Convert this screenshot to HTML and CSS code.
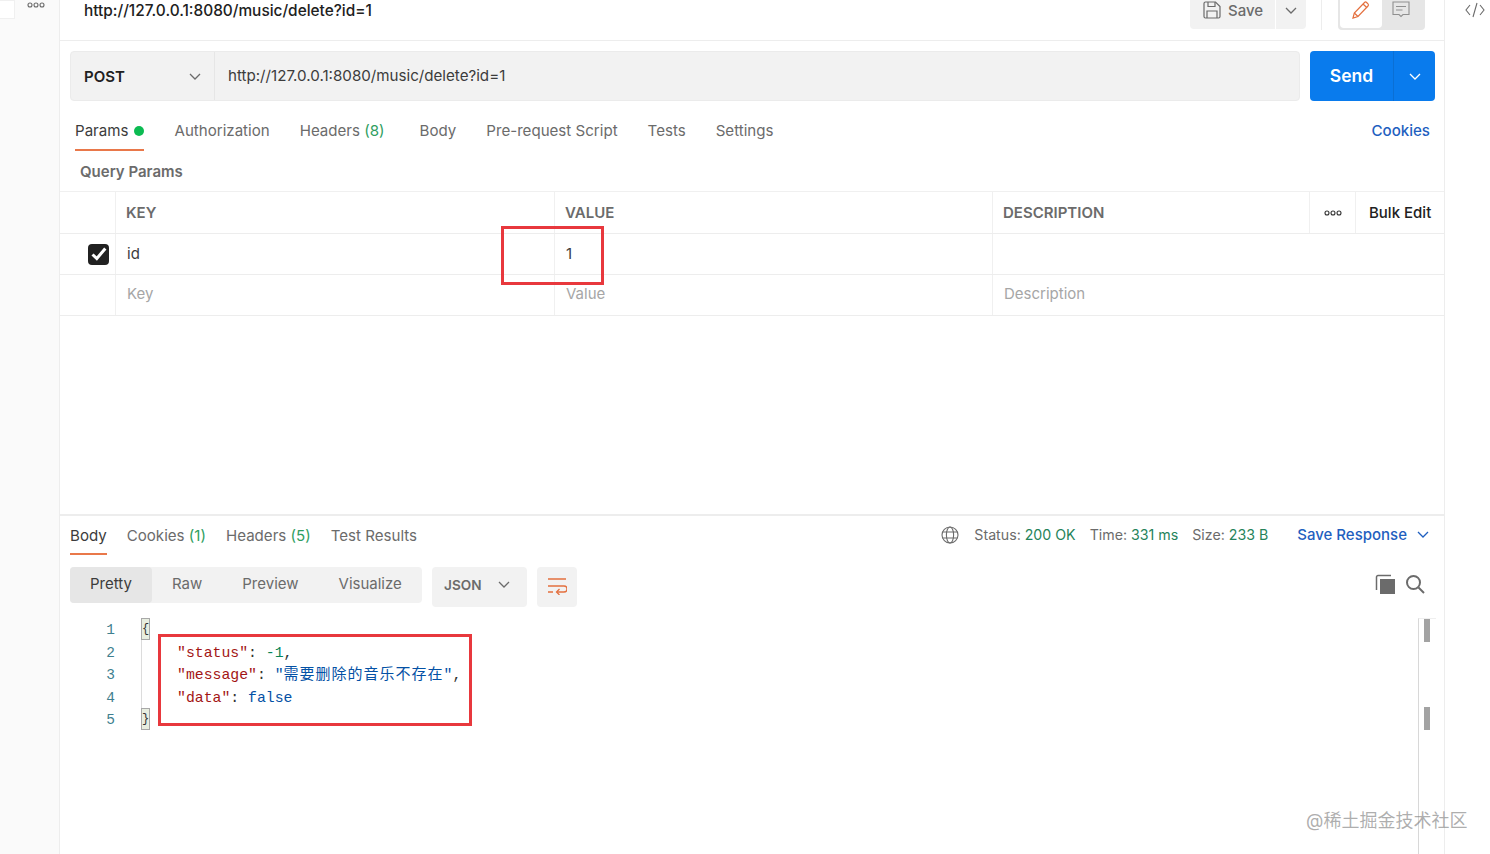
FILE: index.html
```html
<!DOCTYPE html>
<html lang="en">
<head>
    <meta charset="UTF-8">
    <title>POST delete music</title>
    <link rel="stylesheet" href="styles.css">
</head>
<body>
<div class="app">
    <aside class="side">
        <div class="side-tab"></div>
        <svg class="dots side-dots" width="18" height="6" viewBox="0 0 18 6"><circle cx="3" cy="3" r="2"/><circle cx="9" cy="3" r="2"/><circle cx="15" cy="3" r="2"/></svg>
    </aside>

    <main class="main">
        <!-- request title -->
        <header class="title-bar">
            <span class="req-title">http://127.0.0.1:8080/music/delete?id=1</span>
            <div class="save-group">
                <div class="save-btn">
                    <svg width="18" height="18" viewBox="0 0 18 18" fill="none" stroke="#6b6b6b" stroke-width="1.2"><path d="M1 2.500a1.500 1.500 0 0 1 1.500-1.500h10l4.500 4.500v10a1.500 1.500 0 0 1-1.500 1.500h-13a1.500 1.500 0 0 1-1.500-1.500z"/><path d="M5 1v4.500h7V1M4 17v-7h10v7"/></svg>
                    <span>Save</span>
                </div>
                <div class="save-arrow">
                    <svg class="chev" width="12" height="7" viewBox="0 0 12 7"><path d="M1 1l5 5 5-5"/></svg>
                </div>
            </div>
            <div class="mode-switch">
                <div class="mode active">
                    <svg width="20" height="20" viewBox="0 0 20 20" fill="none" stroke="#e4703f" stroke-width="1.2"><path d="M2 18l1.300-5L13.500 2.500a1.500 1.500 0 0 1 2.100 0l1.400 1.400a1.500 1.500 0 0 1 0 2.100L7 16.500z"/><path d="M3.300 13L7 16.500M12 4l4 3.800"/></svg>
                </div>
                <div class="mode mode-note">
                    <svg width="18" height="18" viewBox="0 0 18 18" fill="none" stroke="#8f8f8f" stroke-width="1.1"><path d="M1 1h16v12.500h-6l-2 2-2-2H1z"/><path d="M4 5.500h10M4 9h6.500"/></svg>
                </div>
            </div>
        </header>

        <!-- url bar -->
        <div class="url-bar">
            <div class="url-field">
                <div class="method">
                    <span>POST</span>
                    <svg class="chev" width="12" height="7" viewBox="0 0 12 7"><path d="M1 1l5 5 5-5"/></svg>
                </div>
                <div class="url-text">http://127.0.0.1:8080/music/delete?id=1</div>
            </div>
            <div class="send">
                <span class="send-label">Send</span>
                <span class="send-arrow"><svg class="chev chev-white" width="12" height="7" viewBox="0 0 12 7"><path d="M1 1l5 5 5-5"/></svg></span>
            </div>
        </div>

        <!-- request tabs -->
        <nav class="req-tabs">
            <span class="tab on">Params<i class="green-dot"></i></span>
            <span class="tab t-auth">Authorization</span>
            <span class="tab t-head">Headers <em>(8)</em></span>
            <span class="tab t-body">Body</span>
            <span class="tab t-pre">Pre-request Script</span>
            <span class="tab t-tests">Tests</span>
            <span class="tab">Settings</span>
            <span class="cookies-link">Cookies</span>
        </nav>
        <div class="query-title">Query Params</div>

        <!-- params table -->
        <div class="params">
            <div class="row head">
                <div class="cell"></div>
                <div class="cell key-cell">KEY</div>
                <div class="cell">VALUE</div>
                <div class="cell">DESCRIPTION</div>
                <div class="cell dots-cell">
                    <svg class="dots dark" width="18" height="6" viewBox="0 0 18 6"><circle cx="3" cy="3" r="2"/><circle cx="9" cy="3" r="2"/><circle cx="15" cy="3" r="2"/></svg>
                </div>
                <div class="cell bulk">Bulk Edit</div>
            </div>
            <div class="row">
                <div class="cell check-cell">
                    <span class="check"><svg width="16" height="14" viewBox="0 0 16 14" fill="none" stroke="#fff" stroke-width="3"><path d="M1.500 7.500l4.300 4 8.500-10"/></svg></span>
                </div>
                <div class="cell val">id</div>
                <div class="cell val">1</div>
                <div class="cell wide"></div>
            </div>
            <div class="row">
                <div class="cell"></div>
                <div class="cell val ph">Key</div>
                <div class="cell val ph">Value</div>
                <div class="cell val ph wide">Description</div>
            </div>
        </div>

        <!-- response -->
        <section class="response">
            <div class="res-head">
                <span class="res-tab on">Body</span>
                <span class="res-tab">Cookies <em>(1)</em></span>
                <span class="res-tab">Headers <em>(5)</em></span>
                <span class="res-tab">Test Results</span>
                <div class="res-meta">
                    <svg class="globe" width="18" height="18" viewBox="0 0 18 18" fill="none" stroke="#6b6b6b" stroke-width="1.100"><circle cx="9" cy="9" r="8"/><ellipse cx="9" cy="9" rx="3.600" ry="8"/><path d="M1.600 6h14.800M1.600 12h14.800"/></svg>
                    <span class="stat">Status: <b>200 OK</b></span>
                    <span class="stat">Time: <b>331 ms</b></span>
                    <span class="stat">Size: <b>233 B</b></span>
                    <span class="save-res">Save Response
                        <svg class="chev chev-blue" width="12" height="7" viewBox="0 0 12 7"><path d="M1 1l5 5 5-5"/></svg>
                    </span>
                </div>
            </div>
            <div class="res-tools">
                <div class="views">
                    <span class="view on">Pretty</span>
                    <span class="view">Raw</span>
                    <span class="view">Preview</span>
                    <span class="view">Visualize</span>
                </div>
                <div class="lang">
                    <span>JSON</span>
                    <svg class="chev" width="12" height="7" viewBox="0 0 12 7"><path d="M1 1l5 5 5-5"/></svg>
                </div>
                <div class="wrap-btn">
                    <svg width="20" height="18" viewBox="0 0 20 18" fill="none" stroke="#e4703f" stroke-width="1.300"><path d="M1 2h18M1 9h16a2.500 2.500 0 0 1 0 6h-7M1 15h5"/><path d="M12.500 12l-3 3 3 3"/></svg>
                </div>
                <div class="res-icons">
                    <svg width="20" height="20" viewBox="0 0 20 20"><path d="M5 5h15v15H5z" fill="#6b6b6b"/><path d="M1.500 16V3a1.500 1.500 0 0 1 1.500-1.500h13" fill="none" stroke="#6b6b6b" stroke-width="1.500"/></svg>
                    <svg width="20" height="20" viewBox="0 0 20 20" fill="none" stroke="#6b6b6b" stroke-width="2"><circle cx="8.500" cy="8.500" r="6.500"/><path d="M13.500 13.500l5.500 5.500"/></svg>
                </div>
            </div>
            <div class="code-area">
                <div class="gutter">
                    <div>1</div><div>2</div><div>3</div><div>4</div><div>5</div>
                </div>
                <div class="code">
                    <div class="line"><span class="brace">{</span></div>
                    <div class="line ind"><span class="k">"status"</span>: <span class="n">-1</span>,</div>
                    <div class="line ind"><span class="k">"message"</span>: <span class="s">"<span class="cjk">需要删除的音乐不存在</span>"</span>,</div>
                    <div class="line ind"><span class="k">"data"</span>: <span class="s">false</span></div>
                    <div class="line"><span class="brace">}</span></div>
                </div>
                <div class="scroll-track">
                    <span class="thumb first"></span>
                    <span class="thumb"></span>
                </div>
            </div>
        </section>
    </main>

    <aside class="rail">
        <svg width="20" height="16" viewBox="0 0 20 16" fill="none" stroke="#6b6b6b" stroke-width="1.100"><path d="M5 3L1 8l4 5M15 3l4 5-4 5M12 1L8 15"/></svg>
    </aside>

    <!-- annotations drawn on top of the screenshot -->
    <div class="mark mark-value"></div>
    <div class="mark mark-code"></div>
    <div class="watermark">@稀土掘金技术社区</div>
</div>
</body>
</html>
```

FILE: styles.css
```css
* {
    margin: 0;
    padding: 0;
    box-sizing: border-box;
    font-family: Inter, 'Noto Sans CJK SC', sans-serif;
}
body {
    background: #fff;
    overflow: hidden;
}
em {
    font-style: normal;
    color: #2f9e5f;
}
.app {
    position: relative;
    display: flex;
    width: 1490px;
    height: 854px;
    overflow: hidden;
}
.chev {
    fill: none;
    stroke: #6b6b6b;
    stroke-width: 1.3;
    flex: none;
}
.chev-white {
    stroke: #fff;
}
.chev-blue {
    stroke: #1f5fbf;
}
.dots {
    fill: none;
    stroke: #6b6b6b;
    stroke-width: 1.1;
}
.dots.dark {
    stroke: #333;
}

/* left strip */
.side {
    width: 60px;
    flex: none;
    display: flex;
    align-items: flex-start;
    gap: 12px;
    background: #fafafa;
    border-right: 1px solid #ededed;
}
.side-tab {
    width: 15px;
    height: 19px;
    background: #fff;
    border: 1px solid #f0f0f0;
    border-left: none;
}
.side-dots {
    margin-top: 2px;
}

/* middle */
.main {
    width: 1385px;
    flex: none;
    display: flex;
    flex-direction: column;
    border-right: 1px solid #ededed;
}
.title-bar {
    height: 41px;
    flex: none;
    display: flex;
    align-items: flex-start;
    padding-left: 24px;
    border-bottom: 1px solid #ededed;
}
.req-title {
    font-size: 15.4px;
    font-weight: 500;
    line-height: 21px;
    color: #212121;
    flex: 1;
    white-space: nowrap;
}
.save-group {
    display: flex;
    height: 30px;
    margin-top: -1px;
    gap: 1px;
    margin-right: 32px;
}
.save-btn {
    width: 85px;
    background: #f2f2f2;
    border-radius: 0 0 0 4px;
    display: flex;
    align-items: center;
    gap: 7px;
    padding-left: 13px;
    font-size: 15px;
    font-weight: 500;
    color: #6b6b6b;
}
.save-btn svg {
    margin-top: -8px;
}
.save-btn span {
    margin-top: -8px;
}
.save-arrow {
    width: 30px;
    background: #f2f2f2;
    border-radius: 0 0 4px 0;
    display: flex;
    align-items: center;
    justify-content: center;
}
.save-arrow svg {
    margin-top: -7px;
}
.mode-switch {
    display: flex;
    width: 87px;
    height: 30px;
    margin-right: 19px;
    background: #e6e6e6;
    border-radius: 0 0 4px 4px;
    position: relative;
}
.mode-switch::before {
    content: '';
    position: absolute;
    left: -17px;
    top: 0;
    height: 30px;
    border-left: 1px solid #ededed;
}
.mode {
    width: 42px;
    height: 28px;
    margin-left: 2px;
    display: flex;
    align-items: center;
    justify-content: center;
}
.mode svg {
    margin-top: -8px;
}
.mode.active {
    background: #fff;
    border-radius: 0 0 4px 4px;
}
.mode-note {
    width: 34px;
}

/* url bar */
.url-bar {
    display: flex;
    gap: 10px;
    padding: 10px 9px 0 10px;
    flex: none;
}
.url-field {
    flex: 1;
    height: 50px;
    display: flex;
    background: #f2f2f2;
    border: 1px solid #ebebeb;
    border-radius: 4px;
}
.method {
    width: 144px;
    display: flex;
    align-items: center;
    justify-content: space-between;
    padding: 0 13px;
    font-size: 15px;
    font-weight: 600;
    color: #212121;
    border-right: 1px solid #e6e6e6;
}
.url-text {
    padding-left: 13px;
    line-height: 47px;
    font-size: 15.15px;
    color: #3c3c3c;
}
.send {
    width: 125px;
    height: 50px;
    display: flex;
    background: #097bed;
    border-radius: 4px;
    color: #fff;
}
.send-label {
    width: 84px;
    text-align: center;
    line-height: 50px;
    font-size: 17.5px;
    font-weight: 600;
    border-right: 1px solid #0a6fd4;
}
.send-arrow {
    flex: 1;
    display: flex;
    align-items: center;
    justify-content: center;
}

/* request tabs */
.req-tabs {
    display: flex;
    height: 50px;
    padding: 0 14px 0 15px;
    flex: none;
    font-size: 15.1px;
    color: #6b6b6b;
}
.tab {
    height: 50px;
    line-height: 59px;
    margin-right: 30px;
    white-space: nowrap;
}
.tab.on {
    display: flex;
    color: #3c3c3c;
    border-bottom: 2px solid #e9784a;
}
.t-head {
    margin-right: 35px;
}
.green-dot {
    width: 10px;
    height: 10px;
    margin: 25px 0 0 6px;
    border-radius: 50%;
    background: #0cbb52;
}
.cookies-link {
    margin-left: auto;
    line-height: 59px;
    font-weight: 500;
    color: #1f5fbf;
}
.query-title {
    height: 40px;
    flex: none;
    padding: 11px 0 0 20px;
    font-size: 15px;
    font-weight: 600;
    color: #6b6b6b;
}

/* params table */
.params {
    flex: none;
    border-top: 1px solid #f0f0f0;
}
.row {
    display: grid;
    grid-template-columns: 56px 439px 438px 317px 46px 88px;
    height: 41px;
    border-bottom: 1px solid #ededed;
}
.row.head {
    height: 42px;
}
.cell {
    display: flex;
    align-items: center;
    padding-left: 10px;
    border-right: 1px solid #f0f0f0;
    font-size: 15px;
    min-width: 0;
}
.head .cell {
    font-weight: 600;
    color: #6b6b6b;
}
.val {
    padding-left: 11px;
    padding-bottom: 2px;
    color: #3c3c3c;
}
.ph {
    padding-bottom: 3px;
    color: #a6a6a6;
}
.wide {
    grid-column: span 3;
    border-right: none;
}
.check-cell {
    justify-content: flex-end;
    padding: 0 6px 0 0;
}
.check {
    width: 21px;
    height: 21px;
    border-radius: 4px;
    background: #212121;
    display: flex;
    align-items: center;
    justify-content: center;
}
.dots-cell {
    padding: 0;
    justify-content: center;
}
.head .bulk {
    padding: 0 0 0 13px;
    border-right: none;
    font-weight: 500;
    color: #212121;
    white-space: nowrap;
}

/* response */
.response {
    margin-top: 198px;
    flex: 1;
    display: flex;
    flex-direction: column;
    border-top: 2px solid #ededed;
}
.res-head {
    display: flex;
    height: 40px;
    flex: none;
    padding: 0 15px 0 10px;
    font-size: 15.1px;
    color: #6b6b6b;
}
.res-tab {
    height: 39px;
    line-height: 39px;
    margin-right: 20px;
    white-space: nowrap;
}
.res-tab.on {
    color: #3c3c3c;
    border-bottom: 2px solid #e9784a;
}
.res-meta {
    margin-left: auto;
    display: flex;
    align-items: center;
    height: 37px;
    font-size: 14.2px;
}
.globe {
    margin-right: 15px;
}
.stat {
    margin-right: 14px;
    white-space: nowrap;
}
.stat b {
    font-weight: 400;
    color: #25835a;
}
.save-res {
    display: flex;
    align-items: center;
    gap: 10px;
    margin-left: 15px;
    font-weight: 500;
    font-size: 15px;
    color: #1f5fbf;
    white-space: nowrap;
}
.res-tools {
    display: flex;
    align-items: flex-start;
    height: 50px;
    flex: none;
    padding: 11px 19px 0 10px;
    font-size: 15px;
    color: #6b6b6b;
}
.views {
    display: flex;
    width: 352px;
    height: 36px;
    background: #f2f2f2;
    border-radius: 4px;
}
.view {
    line-height: 34px;
    padding: 0 20px;
}
.view.on {
    width: 82px;
    height: 36px;
    background: #e6e6e6;
    border-radius: 4px;
    color: #3c3c3c;
}
.lang {
    width: 95px;
    height: 40px;
    margin-left: 10px;
    display: flex;
    align-items: center;
    gap: 16px;
    padding: 0 0 5px 12px;
    background: #f2f2f2;
    border-radius: 4px;
    font-size: 13.6px;
    font-weight: 600;
}
.wrap-btn {
    width: 40px;
    height: 40px;
    margin-left: 10px;
    padding-bottom: 2px;
    background: #f2f2f2;
    border-radius: 4px;
    display: flex;
    align-items: center;
    justify-content: center;
}
.res-icons {
    margin-left: auto;
    display: flex;
    gap: 10px;
    padding-top: 7px;
}

/* code viewer */
.code-area {
    position: relative;
    flex: 1;
    display: flex;
    margin-top: 12px;
}
.gutter {
    width: 55px;
    text-align: right;
    font: 14.5px/24.5px 'Liberation Mono', monospace;
    color: #3f7f8f;
}
.gutter div {
    height: 22.5px;
    font-family: inherit;
}
.code {
    margin-left: 26px;
    font: 14.8px/24.5px 'Liberation Mono', 'Noto Sans CJK SC', monospace;
    color: #333;
    border-left: 1px solid #dcdcdc;
    height: 112px;
}
.line {
    height: 22.5px;
    white-space: pre;
    font-family: inherit;
}
.ind {
    padding-left: 35px;
}
.brace {
    display: inline-block;
    vertical-align: top;
    width: 9px;
    height: 22px;
    margin-left: -1px;
    background: #e8eee0;
    border: 1px solid #a8a8a8;
    line-height: 20px;
    text-align: center;
    font-family: inherit;
    font-size: 12px;
    overflow: hidden;
}
.k {
    font-family: inherit;
    color: #a31515;
}
.n {
    font-family: inherit;
    color: #098658;
}
.s {
    font-family: inherit;
    color: #0451a5;
}
.cjk {
    font-family: 'Noto Sans CJK SC', sans-serif;
    font-size: 15px;
    line-height: 0;
    letter-spacing: 1px;
}
.scroll-track {
    position: absolute;
    left: 1358px;
    top: 0;
    bottom: 0;
    width: 18px;
    border-left: 1px solid #d8d8d8;
    border-top: 1px solid #efefef;
}
.thumb {
    position: absolute;
    left: 5px;
    top: 88px;
    width: 6px;
    height: 23px;
    background: #a3a3a3;
}
.thumb.first {
    top: 0;
}

/* right strip */
.rail {
    flex: 1;
    display: flex;
    justify-content: center;
    padding: 2px 0 0 15px;
    align-items: flex-start;
}

/* annotations */
.mark {
    position: absolute;
    border: 3px solid #e8383d;
}
.mark-value {
    left: 501px;
    top: 226px;
    width: 103px;
    height: 59px;
}
.mark-code {
    left: 158px;
    top: 634px;
    width: 314px;
    height: 92px;
}
.watermark {
    position: absolute;
    left: 1306px;
    top: 808px;
    font-size: 18px;
    line-height: 26px;
    color: rgba(120, 120, 120, 0.6);
    white-space: nowrap;
}
```
